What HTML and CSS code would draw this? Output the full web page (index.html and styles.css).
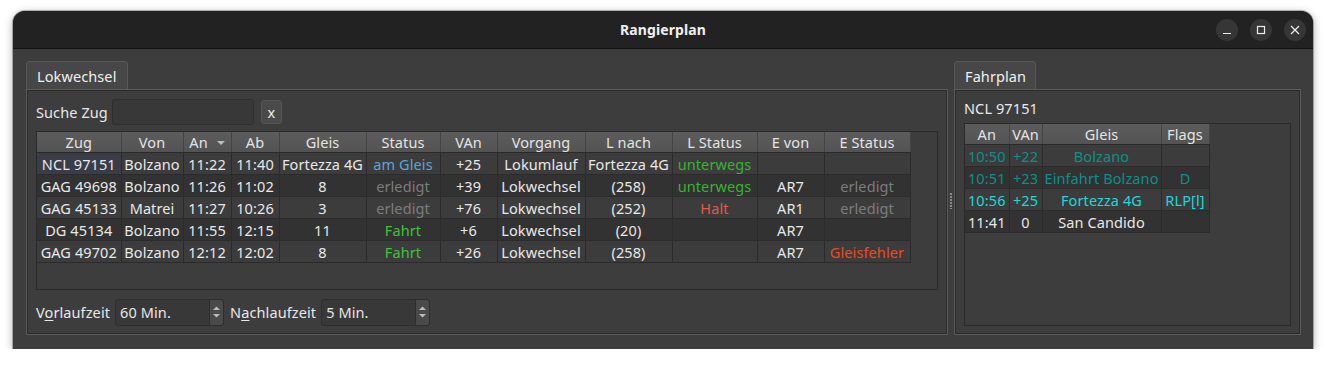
FILE: index.html
```html
<!DOCTYPE html>
<html lang="de">
<head>
<meta charset="utf-8">
<title>Rangierplan</title>
<link rel="stylesheet" href="styles.css">
</head>
<body>
<div class="window">
  <div class="titlebar">
    <div class="title">Rangierplan</div>
    <div class="wbtns">
      <span class="wbtn"><svg width="10" height="10" viewBox="0 0 10 10"><path d="M1 8.5h8" stroke="#eee" stroke-width="1.2"/></svg></span>
      <span class="wbtn"><svg width="10" height="10" viewBox="0 0 10 10"><rect x="1.5" y="1.5" width="7" height="7" fill="none" stroke="#eee" stroke-width="1.2"/></svg></span>
      <span class="wbtn"><svg width="10" height="10" viewBox="0 0 10 10"><path d="M1 1L9 9M9 1L1 9" stroke="#eee" stroke-width="1.2"/></svg></span>
    </div>
  </div>
  <div class="content">
    <div class="pane left">
      <div class="tabs"><span class="tab">Lokwechsel</span></div>
      <div class="panel">
        <div class="search">
          <span class="lbl">Suche Zug</span>
          <span class="input"></span>
          <span class="btn">x</span>
        </div>
        <div class="tablebox">
          <table class="grid main">
            <colgroup>
              <col style="width:84px"><col style="width:62px"><col style="width:48px"><col style="width:48px"><col style="width:87px"><col style="width:74px"><col style="width:57px"><col style="width:88px"><col style="width:87px"><col style="width:85px"><col style="width:67px"><col style="width:86px">
            </colgroup>
            <thead>
              <tr><th>Zug</th><th>Von</th><th class="sort">An <span class="arrow"></span></th><th>Ab</th><th>Gleis</th><th>Status</th><th>VAn</th><th>Vorgang</th><th>L nach</th><th>L Status</th><th>E von</th><th>E Status</th></tr>
            </thead>
            <tbody>
              <tr class="odd"><td class="cur">NCL 97151</td><td>Bolzano</td><td>11:22</td><td>11:40</td><td>Fortezza 4G</td><td class="blue">am Gleis</td><td>+25</td><td>Lokumlauf</td><td>Fortezza 4G</td><td class="green">unterwegs</td><td></td><td></td></tr>
              <tr class="even"><td>GAG 49698</td><td>Bolzano</td><td>11:26</td><td>11:02</td><td>8</td><td class="gray">erledigt</td><td>+39</td><td>Lokwechsel</td><td>(258)</td><td class="green">unterwegs</td><td>AR7</td><td class="gray">erledigt</td></tr>
              <tr class="odd"><td>GAG 45133</td><td>Matrei</td><td>11:27</td><td>10:26</td><td>3</td><td class="gray">erledigt</td><td>+76</td><td>Lokwechsel</td><td>(252)</td><td class="red">Halt</td><td>AR1</td><td class="gray">erledigt</td></tr>
              <tr class="even"><td>DG 45134</td><td>Bolzano</td><td>11:55</td><td>12:15</td><td>11</td><td class="green2">Fahrt</td><td>+6</td><td>Lokwechsel</td><td>(20)</td><td></td><td>AR7</td><td></td></tr>
              <tr class="odd"><td>GAG 49702</td><td>Bolzano</td><td>12:12</td><td>12:02</td><td>8</td><td class="green2">Fahrt</td><td>+26</td><td>Lokwechsel</td><td>(258)</td><td></td><td>AR7</td><td class="orange">Gleisfehler</td></tr>
            </tbody>
          </table>
        </div>
        <div class="spins">
          <span class="lbl">V<u>o</u>rlaufzeit</span>
          <span class="spin"><span class="val">60 Min.</span><span class="arrows"><svg width="9" height="20" viewBox="0 0 9 20"><path d="M1 8L4.5 4.5L8 8Z" fill="#bbb"/><path d="M1 12L4.5 15.5L8 12Z" fill="#bbb"/></svg></span></span>
          <span class="lbl">N<u>a</u>chlaufzeit</span>
          <span class="spin"><span class="val">5 Min.</span><span class="arrows"><svg width="9" height="20" viewBox="0 0 9 20"><path d="M1 8L4.5 4.5L8 8Z" fill="#bbb"/><path d="M1 12L4.5 15.5L8 12Z" fill="#bbb"/></svg></span></span>
        </div>
      </div>
    </div>
    <div class="splitter"><span class="dots"></span></div>
    <div class="pane right">
      <div class="tabs"><span class="tab rtab">Fahrplan</span></div>
      <div class="panel rpanel">
        <div class="zug">NCL 97151</div>
        <div class="tablebox rbox">
          <table class="grid side">
            <colgroup><col style="width:44px"><col style="width:33px"><col style="width:119px"><col style="width:48px"></colgroup>
            <thead><tr><th>An</th><th>VAn</th><th>Gleis</th><th>Flags</th></tr></thead>
            <tbody>
              <tr class="odd teal"><td>10:50</td><td>+22</td><td>Bolzano</td><td></td></tr>
              <tr class="even teal"><td>10:51</td><td>+23</td><td>Einfahrt Bolzano</td><td>D</td></tr>
              <tr class="odd cyan"><td>10:56</td><td>+25</td><td>Fortezza 4G</td><td>RLP[l]</td></tr>
              <tr class="even"><td>11:41</td><td>0</td><td>San Candido</td><td></td></tr>
            </tbody>
          </table>
        </div>
      </div>
    </div>
  </div>
</div>
</body>
</html>
```

FILE: styles.css
```css
html, body { margin: 0; padding: 0; background: #ffffff; }
body { font-family: "Noto Sans", "DejaVu Sans", sans-serif; font-size: 14.5px; letter-spacing: 0.1px; color: #e6e6e6; }

.window {
  margin: 11px 0 0 13px;
  width: 1300px;
  height: 338px;
  border-radius: 12px 12px 0 0;
  overflow: hidden;
  box-shadow: 0 2px 8px rgba(0,0,0,0.35), 0 0 0 1px rgba(0,0,0,0.25);
  background: #3d3d3d;
  display: flex;
  flex-direction: column;
}
.titlebar {
  height: 37px;
  background: #222222;
  border-bottom: 1px solid #121212;
  display: flex;
  align-items: center;
  justify-content: center;
  position: relative;
  flex: none;
}
.title { font-weight: bold; font-size: 14px; letter-spacing: 0.1px; color: #f0f0f0; }
.wbtns { position: absolute; right: 7px; top: 8px; display: flex; gap: 12px; }
.wbtn { width: 22px; height: 22px; border-radius: 50%; background: #363636; display: flex; align-items: center; justify-content: center; }

.content { flex: 1; display: flex; padding: 12px 12px 0 13px; }
.pane { display: flex; flex-direction: column; }
.left { width: 922px; }
.right { width: 347px; }
.splitter { width: 6px; position: relative; }
.dots { position: absolute; left: 2px; top: 132px; width: 2px; height: 16px;
  background: repeating-linear-gradient(to bottom, #8a8a8a 0 2px, transparent 2px 3px); }

.tabs { display: flex; height: 28px; }
.tab {
  padding: 0 11px 0 10px;
  border: 1px solid #585858;
  border-bottom: none;
  border-radius: 4px 4px 0 0;
  background: #474747;
  display: flex; align-items: center;
  color: #f0f0f0;
}
.rtab { padding: 0 9px 0 10px; }
.panel {
  border: 1px solid #5a5a5a;
  box-shadow: inset 0 0 0 1px #2c2c2c;
  height: 246px;
  box-sizing: border-box;
  padding: 9px 9px 0 9px;
  display: flex; flex-direction: column;
}
.search { display: flex; align-items: center; height: 26px; }
.lbl { color: #e8e8e8; }
.search .lbl { margin-right: 4px; }
.input { width: 140px; height: 24px; border: 1px solid #2e2e2e; border-radius: 3px; background: #383838; }
.btn { margin-left: 7px; width: 21px; height: 24px; border: 1px solid #555; border-radius: 3px; background: #4a4a4a; display: flex; align-items: center; justify-content: center; color: #eee; box-sizing: border-box; }

.tablebox {
  margin-top: 6px;
  height: 159px;
  border: 1px solid #2a2a2a;
  background: #3d3d3d;
  box-sizing: border-box;
}
.grid { border-collapse: collapse; table-layout: fixed; }
.grid th {
  height: 20px; padding: 0;
  background: linear-gradient(#5c5c5c, #535353);
  color: #e4e4e4; font-weight: normal;
  border-right: 1px solid #444;
  border-bottom: 1px solid #2a2a2a;
  text-align: center;
  white-space: nowrap;
}
.grid td {
  height: 21px; padding: 0;
  text-align: center; white-space: nowrap; overflow: hidden;
  border-right: 1px solid #2b2b2b;
  border-bottom: 1px solid #2b2b2b;
  color: #e8e8e8;
}
.grid tr.odd td { background: #3c3c3c; }
.grid tr.even td { background: #323232; }
.grid td.cur { background: #3a3d47 !important; }
.arrow { display: inline-block; width: 0; height: 0; border-left: 4px solid transparent; border-right: 4px solid transparent; border-top: 4px solid #bdbdbd; margin-left: 5px; vertical-align: 3px; }

.blue { color: #5aa6d6 !important; }
.gray { color: #7c7c7c !important; }
.green { color: #35b52f !important; }
.green2 { color: #3ec23a !important; }
.red { color: #e35a4b !important; }
.orange { color: #ec4a1c !important; }

.spins { display: flex; align-items: center; margin-top: 8px; height: 28px; }
.spin { display: flex; height: 27px; border: 1px solid #2e2e2e; border-radius: 3px; background: #383838; box-sizing: border-box; margin: 0 6px 0 5px; }
.spin .val { width: 89px; padding-left: 4px; display: flex; align-items: center; }
.spin .arrows { width: 13px; border-left: 1px solid #2e2e2e; background: #4a4a4a; border-radius: 0 3px 3px 0; display: flex; align-items: center; justify-content: center; }
.spins .lbl u { text-decoration: underline; text-underline-offset: 2px; }

.rpanel { padding-top: 8px; }
.zug { height: 23px; line-height: 20px; color: #eaeaea; }
.rbox { margin-top: 2px; height: 203px; }
.side tr.teal td { color: #0e8f8a; }
.side tr.cyan td { color: #1fd8d8; }
```
